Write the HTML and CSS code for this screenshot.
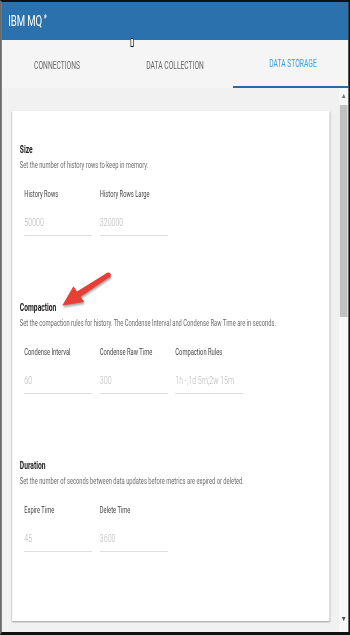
FILE: index.html
```html
<!DOCTYPE html>
<html lang="en">
<head>
    <meta charset="UTF-8">
    <meta name="viewport" content="width=device-width, initial-scale=1.0">
    <title>IBM MQ</title>
    <link rel="stylesheet" href="styles.css">
</head>
<body>
    <div class="viewport">
    <div class="frame">
        <header class="topbar">IBM MQ <span class="star">*</span></header>
        <span class="cursor"></span>

        <nav class="tabs">
            <div class="tab">Connections</div>
            <div class="tab">Data Collection</div>
            <div class="tab active">Data Storage</div>
        </nav>

        <main class="body">
            <div class="content">
                <div class="card">
                    <section class="section">
                        <h3>Size</h3>
                        <p>Set the number of history rows to keep in memory.</p>
                        <div class="fields">
                            <div class="field"><label>History Rows</label><div class="value">50000</div></div>
                            <div class="field"><label>History Rows Large</label><div class="value">320000</div></div>
                        </div>
                    </section>

                    <section class="section">
                        <h3>Compaction</h3>
                        <p>Set the compaction rules for history. The Condense Interval and Condense Raw Time are in seconds.</p>
                        <div class="fields">
                            <div class="field"><label>Condense Interval</label><div class="value">60</div></div>
                            <div class="field"><label>Condense Raw Time</label><div class="value">300</div></div>
                            <div class="field"><label>Compaction Rules</label><div class="value">1h -;1d 5m;2w 15m</div></div>
                        </div>
                    </section>

                    <section class="section">
                        <h3>Duration</h3>
                        <p>Set the number of seconds between data updates before metrics are expired or deleted.</p>
                        <div class="fields">
                            <div class="field"><label>Expire Time</label><div class="value">45</div></div>
                            <div class="field"><label>Delete Time</label><div class="value">3600</div></div>
                        </div>
                    </section>

                    <!-- callout arrow pointing at Compaction -->
                    <svg class="arrow" viewBox="0 0 56 44" preserveAspectRatio="none">
                        <polygon points="4,37.5 26,33.9 22.4,28.7 51.5,9.1 48.5,4.9 18.8,23.5 15.2,18.3" fill="#e53f36"/>
                        <circle cx="50" cy="7" r="2.6" fill="#e53f36"/>
                    </svg>
                </div>
            </div>

            <div class="scrollbar">
                <div class="sb-btn"><span class="tri up"></span></div>
                <div class="thumb"></div>
                <div class="track"></div>
                <div class="sb-btn"><span class="tri down"></span></div>
            </div>
        </main>
    </div>
    </div>
</body>
</html>
```

FILE: styles.css
```css
html, body { margin: 0; padding: 0; overflow: hidden; }
body { font-family: Roboto, "Liberation Sans", sans-serif; background: #f1f1f1; }
.viewport { width: 350px; height: 635px; overflow: hidden; }

/* the captured window is squeezed horizontally */
.frame {
    position: relative;
    width: 547px; height: 635px;
    box-sizing: border-box;
    transform: scaleX(0.64); transform-origin: 0 0;
    border-top: 2px solid #111; border-left: 3px solid #6b6b6b;
    border-right: 3px solid #111; border-bottom: 3px solid #111;
    display: flex; flex-direction: column;
}

.topbar {
    height: 38px; flex: none;
    background: #2a71ad; color: #fff;
    display: flex; align-items: center;
    padding-left: 10px;
    font-size: 15px; letter-spacing: -0.2px;
}
.star { font-size: 11px; margin-left: 3px; align-self: flex-start; margin-top: 10px; }

.cursor {
    position: absolute; left: 201px; top: 36px;
    width: 3px; height: 7px;
    border: 1.5px solid #111; background: #fff;
}

.tabs {
    height: 48px; flex: none;
    display: grid; grid-template-columns: 1fr 1fr 1fr;
    background: #f5f5f5;
}
.tab {
    display: flex; align-items: center; justify-content: center;
    text-transform: uppercase; font-size: 10.5px; color: #666;
    box-sizing: border-box; padding-top: 2px;
}
.tab:first-child { padding-right: 8px; }
.tab.active { color: #3b9bd6; border-bottom: 2px solid #2a6aa3; padding-top: 0; padding-left: 8px; }

.body { flex: 1; display: flex; min-height: 0; background: #f1f1f1; }
.content { flex: 1; padding: 23px 15px 11px 16px; }

.card {
    position: relative;
    height: 100%; box-sizing: border-box;
    background: #fff;
    box-shadow: 0 1px 2px rgba(0,0,0,.35);
    padding: 33px 12px 0;
}

.section { margin-bottom: 66px; }
.section h3 { margin: 0; font-size: 10.5px; line-height: 12px; font-weight: 700; color: #222; }
.section p { margin: 3px 0 0; font-size: 9px; line-height: 12px; color: #6a6a6a; }

.fields { display: flex; gap: 12px; margin-top: 17px; padding-left: 7px; }
.field { width: 106px; }
.field label { display: block; font-size: 9px; line-height: 12px; color: #444; }
.field .value {
    margin-top: 16px; padding-bottom: 5px;
    font-size: 11px; line-height: 14px; font-weight: 300; color: #b5b5b5;
    border-bottom: 1px solid #dedede;
    white-space: nowrap;
}

.arrow {
    position: absolute; left: 72px; top: 157px;
    width: 87.5px; height: 44px;
    filter: drop-shadow(1px 2px 1px rgba(0,0,0,.35));
}

.scrollbar { width: 14px; flex: none; display: flex; flex-direction: column; background: #f7f7f7; }
.sb-btn { height: 16px; display: flex; align-items: center; justify-content: center; }
.thumb { height: 212px; margin: 1px 1px 0; background: #c1c1c1; }
.track { flex: 1; }
.tri { width: 0; height: 0; border-left: 3px solid transparent; border-right: 3px solid transparent; }
.tri.up { border-bottom: 4px solid #777; }
.tri.down { border-top: 4px solid #505050; margin-top: -10px; }
```
